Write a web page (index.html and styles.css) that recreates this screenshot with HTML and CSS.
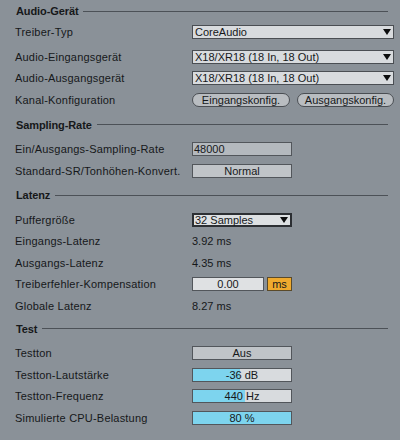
FILE: index.html
```html
<!DOCTYPE html>
<html>
<head>
<meta charset="utf-8">
<link rel="stylesheet" href="styles.css">
</head>
<body>
<div class="page">
  <section class="sec first">
    <div class="head"><span>Audio-Gerät</span></div>
    <div class="row gap-after"><span class="label">Treiber-Typ</span>
      <div class="select full"><span>CoreAudio</span><svg class="arrow" viewBox="0 0 8 6"><polygon points="0,0 8,0 4,6"/></svg></div></div>
    <div class="row"><span class="label">Audio-Eingangsgerät</span>
      <div class="select full"><span>X18/XR18 (18 In, 18 Out)</span><svg class="arrow" viewBox="0 0 8 6"><polygon points="0,0 8,0 4,6"/></svg></div></div>
    <div class="row"><span class="label">Audio-Ausgangsgerät</span>
      <div class="select full"><span>X18/XR18 (18 In, 18 Out)</span><svg class="arrow" viewBox="0 0 8 6"><polygon points="0,0 8,0 4,6"/></svg></div></div>
    <div class="row"><span class="label">Kanal-Konfiguration</span>
      <div class="pills"><div class="pill in">Eingangskonfig.</div><div class="pill out">Ausgangskonfig.</div></div></div>
  </section>
  <section class="sec">
    <div class="head"><span>Sampling-Rate</span></div>
    <div class="row"><span class="label">Ein/Ausgangs-Sampling-Rate</span>
      <div class="box grey left">48000</div></div>
    <div class="row"><span class="label">Standard-SR/Tonhöhen-Konvert.</span>
      <div class="box grey2">Normal</div></div>
  </section>
  <section class="sec">
    <div class="head"><span>Latenz</span></div>
    <div class="row"><span class="label">Puffergröße</span>
      <div class="select half focus"><span>32 Samples</span><svg class="arrow" viewBox="0 0 8 6"><polygon points="0,0 8,0 4,6"/></svg></div></div>
    <div class="row"><span class="label">Eingangs-Latenz</span><span class="value">3.92 ms</span></div>
    <div class="row"><span class="label">Ausgangs-Latenz</span><span class="value">4.35 ms</span></div>
    <div class="row"><span class="label">Treiberfehler-Kompensation</span>
      <div class="combo"><div class="box light short">0.00</div><div class="ms">ms</div></div></div>
    <div class="row"><span class="label">Globale Latenz</span><span class="value">8.27 ms</span></div>
  </section>
  <section class="sec last">
    <div class="head"><span>Test</span></div>
    <div class="row"><span class="label">Testton</span><div class="box grey2">Aus</div></div>
    <div class="row"><span class="label">Testton-Lautstärke</span>
      <div class="box meter"><div class="fill" style="width:48%"></div><span class="mtext">-36 dB</span></div></div>
    <div class="row"><span class="label">Testton-Frequenz</span>
      <div class="box meter"><div class="fill" style="width:53%"></div><span class="mtext">440 Hz</span></div></div>
    <div class="row"><span class="label">Simulierte CPU-Belastung</span>
      <div class="box meter"><div class="fill" style="width:100%"></div><span class="mtext">80 %</span></div></div>
  </section>
</div>
</body>
</html>
```

FILE: styles.css
```css
html, body {
  margin: 0;
  padding: 0;
}
body {
  width: 400px;
  height: 440px;
  background: #8a9198;
  font-family: "Liberation Sans", Arial, sans-serif;
  font-size: 11px;
  color: #16181a;
  overflow: hidden;
}
.page {
  padding: 4px 0 0 15px;
}
.sec {
  margin-top: 7px;
}
.sec.first {
  margin-top: 0;
}
.sec.last {
  margin-top: 5px;
}
.head {
  display: flex;
  align-items: center;
  height: 14px;
  width: 372px;
  font-weight: bold;
  letter-spacing: -0.1px;
  padding-left: 1px;
  margin-bottom: 6.75px;
}
.sec.first .head {
  margin-bottom: 3.5px;
}
.sec.last .head {
  margin-bottom: 7px;
}
.head::after {
  content: "";
  flex: 1;
  height: 1px;
  background: #4c5157;
  margin-left: 5px;
}
.row {
  display: flex;
  align-items: center;
  height: 21.5px;
}
.row.gap-after {
  margin-bottom: 3px;
}
.label {
  width: 177px;
  flex: none;
  letter-spacing: 0.2px;
}
.select {
  box-sizing: border-box;
  height: 14px;
  background: #d8dbde;
  border: 1px solid #4a4e53;
  display: flex;
  align-items: center;
  justify-content: space-between;
  padding: 0 2px 0 2px;
  line-height: 12px;
}
.select.full {
  width: 202px;
}
.select.half {
  width: 100px;
}
.select.focus {
  border: 2px solid #2c2f33;
  padding-left: 1px;
  background: #dde0e2;
}
.arrow {
  width: 8px;
  height: 6px;
  fill: #0c0d0e;
}
.pills {
  display: flex;
  gap: 7px;
}
.pill {
  box-sizing: border-box;
  height: 14px;
  border: 1px solid #4a4e53;
  border-radius: 7px;
  background: #b9bdc1;
  text-align: center;
  line-height: 12px;
}
.pill.in {
  width: 98px;
}
.pill.out {
  width: 97px;
}
.box {
  box-sizing: border-box;
  width: 100px;
  height: 14px;
  border: 1px solid #52565b;
  text-align: center;
  line-height: 12px;
  position: relative;
}
.box.left {
  text-align: left;
  padding-left: 1px;
}
.box.grey {
  background: #b4b9be;
}
.box.grey2 {
  background: #c0c4c8;
}
.box.light {
  background: #dfe1e3;
}
.box.short {
  width: 72px;
}
.combo {
  display: flex;
  gap: 3px;
}
.ms {
  box-sizing: border-box;
  width: 25px;
  height: 14px;
  border: 1px solid #5a4a2a;
  background: #efaa2e;
  text-align: center;
  line-height: 12px;
}
.value {
  padding-left: 0;
}
.meter {
  background: #d8dbde;
  overflow: hidden;
}
.fill {
  position: absolute;
  left: 0;
  top: 0;
  bottom: 0;
  background: #7dd4ee;
}
.mtext {
  position: relative;
}
```
